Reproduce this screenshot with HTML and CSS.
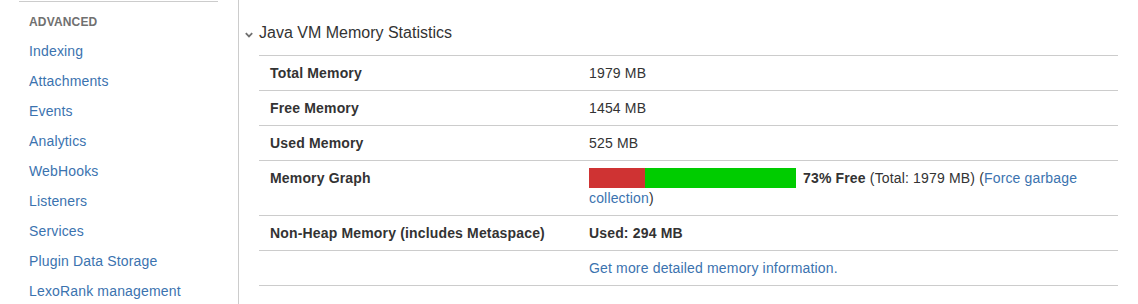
FILE: index.html
```html
<!DOCTYPE html>
<html>
<head>
<meta charset="utf-8">
<link rel="stylesheet" href="styles.css">
</head>
<body>
<div class="page">
  <nav class="sidebar">
    <div class="section">
      <div class="section-title">ADVANCED</div>
      <a class="nav-link" href="#">Indexing</a>
      <a class="nav-link" href="#">Attachments</a>
      <a class="nav-link" href="#">Events</a>
      <a class="nav-link" href="#">Analytics</a>
      <a class="nav-link" href="#">WebHooks</a>
      <a class="nav-link" href="#">Listeners</a>
      <a class="nav-link" href="#">Services</a>
      <a class="nav-link" href="#">Plugin Data Storage</a>
      <a class="nav-link" href="#">LexoRank management</a>
    </div>
  </nav>
  <main class="main">
    <h2 class="panel-title">
      <svg class="chevron" width="8" height="6" viewBox="0 0 8 6"><polyline points="0.8,1.2 4,4.4 7.2,1.2" fill="none" stroke="#707070" stroke-width="1.8"/></svg>
      Java VM Memory Statistics
    </h2>
    <div class="stats">
      <div class="row">
        <div class="label">Total Memory</div>
        <div class="value">1979 MB</div>
      </div>
      <div class="row">
        <div class="label">Free Memory</div>
        <div class="value">1454 MB</div>
      </div>
      <div class="row">
        <div class="label">Used Memory</div>
        <div class="value">525 MB</div>
      </div>
      <div class="row">
        <div class="label">Memory Graph</div>
        <div class="value"><span class="bar"><span class="bar-used"></span><span class="bar-free"></span></span><b>73% Free</b> (Total: 1979 MB) (<a href="#">Force garbage collection</a>)</div>
      </div>
      <div class="row">
        <div class="label">Non-Heap Memory (includes Metaspace)</div>
        <div class="value"><b>Used: 294 MB</b></div>
      </div>
      <div class="row">
        <div class="label"></div>
        <div class="value"><a href="#">Get more detailed memory information.</a></div>
      </div>
    </div>
  </main>
</div>
</body>
</html>
```

FILE: styles.css
```css
html, body {
  margin: 0;
  padding: 0;
  background: #fff;
}
body {
  font-family: "Liberation Sans", Arial, sans-serif;
  font-size: 14px;
  color: #333;
  letter-spacing: 0.16px;
}
a {
  color: #3b73af;
  text-decoration: none;
}
.page {
  display: flex;
  height: 304px;
  overflow: hidden;
}
.sidebar {
  flex: none;
  width: 239px;
  border-right: 1px solid #ccc;
  box-sizing: border-box;
  padding: 1px 20px 0 19px;
}
.section {
  border-top: 1px solid #ccc;
  padding-left: 10px;
}
.section-title {
  font-size: 12px;
  font-weight: bold;
  color: #707070;
  line-height: 20px;
  padding-top: 10px;
  margin-bottom: 4px;
}
.nav-link {
  display: block;
  line-height: 20px;
  padding: 5px 0;
}
.main {
  flex: 1;
  padding: 23px 20px 0 6px;
}
.panel-title {
  margin: 0 0 12px;
  font-size: 16px;
  font-weight: normal;
  line-height: 20px;
  color: #333;
  letter-spacing: 0;
  display: flex;
  align-items: center;
}
.chevron {
  margin: 4px 6px 0 0;
}
.stats {
  margin-left: 14px;
  border-bottom: 1px solid #ccc;
}
.row {
  display: grid;
  grid-template-columns: 330px 1fr;
  border-top: 1px solid #ccc;
  line-height: 20px;
}
.label {
  font-weight: bold;
  padding: 7px 10px 7px 11px;
}
.value {
  padding: 7px 10px 7px 0;
}
.bar {
  display: inline-flex;
  vertical-align: top;
  width: 207px;
  height: 20px;
  margin-right: 7px;
}
.bar-used {
  width: 56px;
  background: #cf3333;
}
.bar-free {
  flex: 1;
  background: #00cc00;
}
```
